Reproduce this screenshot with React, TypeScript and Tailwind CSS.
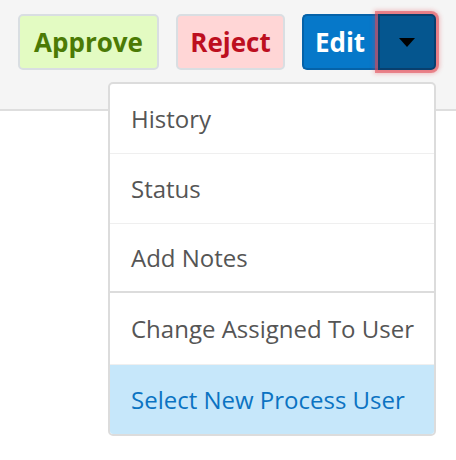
import { useState } from 'react'

const items = [
  { label: 'History', group: 1, h: 'h-[70px]' },
  { label: 'Status', group: 1, h: 'h-[70px]' },
  { label: 'Add Notes', group: 1, h: 'h-[69px]' },
  { label: 'Change Assigned To User', group: 2, h: 'h-[72px]' },
  { label: 'Select New Process User', group: 2, h: 'h-[69px]' },
]

export default function App() {
  const [active] = useState('Select New Process User')

  return (
    <div className="relative h-[460px] w-[456px] bg-white" style={{ fontFamily: '"Open Sans", sans-serif' }}>
      <div className="flex h-[111px] items-start justify-end gap-[17px] border-b-2 border-[#dedede] bg-[#f5f5f5] pr-[20px] pt-[14px]">
        <button className="h-[56px] w-[141px] rounded-[5px] border-2 border-[#d9dee2] bg-[#e3fbc2] text-[26px] font-bold text-[#4b7a05]">
          Approve
        </button>
        <button className="h-[56px] w-[109px] rounded-[5px] border-2 border-[#d9dee2] bg-[#ffd6d6] text-[26px] font-bold text-[#bd0f1f]">
          Reject
        </button>
        <div className="flex h-[56px]">
          <button className="w-[76px] rounded-l-[5px] border-2 border-r-0 border-[#0562a8] bg-[#0678c9] pr-[2px] text-[26px] font-bold text-white">
            Edit
          </button>
          <button className="flex w-[58px] items-center justify-center rounded-r-[5px] border-2 border-[#083f6e] bg-[#05568f] shadow-[0_0_0_3px_rgba(225,70,80,0.55),0_0_4px_4px_rgba(225,70,80,0.3)]">
            <svg width="16" height="9" viewBox="0 0 16 9">
              <path d="M0 0 L16 0 L8 9 Z" fill="#000" />
            </svg>
          </button>
        </div>
      </div>

      <div className="absolute left-[108px] top-[82px] w-[328px] overflow-hidden rounded-[5px] border-2 border-[#dcdcdc] bg-white">
        {items.map((item, i) => {
          const isActive = item.label === active
          const next = items[i + 1]
          let border = ''
          if (next) border = next.group !== item.group ? 'border-b-2 border-[#dcdcdc]' : 'border-b border-[#efefef]'
          return (
            <div
              key={item.label}
              className={`flex items-center pl-[21px] text-[24px] ${item.h} ${border} ${isActive ? 'bg-[#c6e7fa] text-[#0b73c2]' : 'text-[#555555]'}`}
            >
              {item.label}
            </div>
          )
        })}
      </div>
    </div>
  )
}
